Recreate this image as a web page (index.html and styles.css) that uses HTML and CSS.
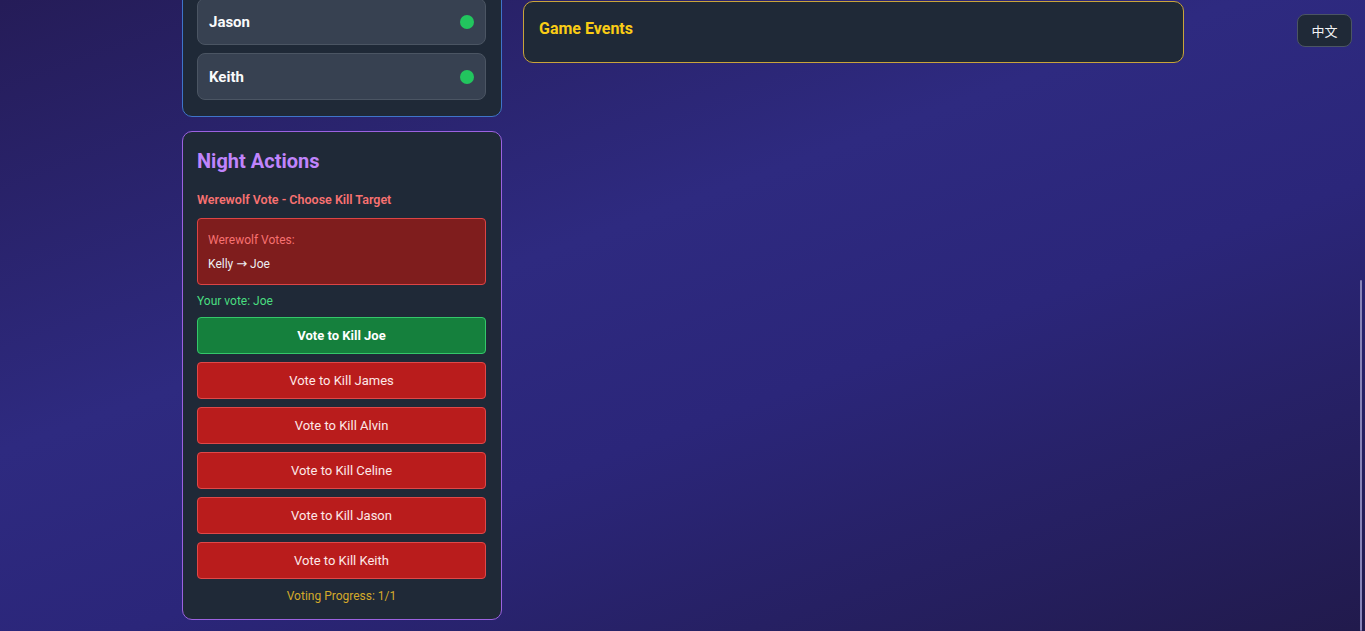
FILE: index.html
```html
<!DOCTYPE html>
<html lang="en">
<head>
<meta charset="utf-8">
<title>Werewolf</title>
<link rel="stylesheet" href="styles.css">
</head>
<body>
<button class="lang-btn">中文</button>
<div class="scroll-thumb"></div>
<main class="layout">
  <div class="left-col">
    <section class="card card-players">
      <div class="player-row"><span class="player-name">Jason</span><span class="dot"></span></div>
      <div class="player-row"><span class="player-name">Keith</span><span class="dot"></span></div>
    </section>
    <section class="card card-night">
      <h2 class="night-title">Night Actions</h2>
      <p class="vote-sub">Werewolf Vote - Choose Kill Target</p>
      <div class="votes-box">
        <p class="votes-label">Werewolf Votes:</p>
        <p class="votes-line">Kelly <span class="arrow">→</span> Joe</p>
      </div>
      <p class="your-vote">Your vote: Joe</p>
      <div class="btn-list">
        <button class="vote-btn selected">Vote to Kill Joe</button>
        <button class="vote-btn">Vote to Kill James</button>
        <button class="vote-btn">Vote to Kill Alvin</button>
        <button class="vote-btn">Vote to Kill Celine</button>
        <button class="vote-btn">Vote to Kill Jason</button>
        <button class="vote-btn">Vote to Kill Keith</button>
      </div>
      <p class="progress">Voting Progress: 1/1</p>
    </section>
  </div>
  <div class="right-col">
    <section class="card card-events">
      <h3 class="events-title">Game Events</h3>
    </section>
  </div>
</main>
</body>
</html>
```
FILE: styles.css
```css
* { box-sizing: border-box; }
html, body { height: 100%; }
body {
  margin: 0;
  overflow: hidden;
  font-family: Roboto, "Noto Sans", sans-serif;
  background: linear-gradient(160deg, #251c58 0%, #2e2a80 40%, #2b267a 60%, #211a4c 100%);
  color: #fff;
}
p, h2, h3 { margin: 0; }

.layout {
  width: 1002px;
  margin: 0 0 0 182px;
  display: flex;
  align-items: flex-start;
  gap: 21px;
}
.left-col {
  width: 320px;
  flex: none;
  display: flex;
  flex-direction: column;
  gap: 14px;
  margin-top: -18px;
}
.right-col {
  flex: 1;
  padding-top: 1px;
}

.card {
  background: #1f2937;
  border: 1px solid;
  border-radius: 10px;
}
.card-players {
  border-color: #3f74c9;
  padding: 15px 15px 16px 14px;
  display: flex;
  flex-direction: column;
  gap: 8px;
}
.player-row {
  height: 47px;
  background: #374151;
  border: 1px solid #4b5563;
  border-radius: 8px;
  display: flex;
  align-items: center;
  justify-content: space-between;
  padding: 0 11px 0 11px;
}
.player-name {
  font-size: 15px;
  font-weight: 700;
  color: #f9fafb;
}
.dot {
  width: 14px;
  height: 14px;
  border-radius: 50%;
  background: #22c55e;
}

.card-night {
  border-color: #9b62e0;
  padding: 16px 15px 16px 14px;
}
.night-title {
  font-size: 20px;
  font-weight: 700;
  color: #c084fc;
  line-height: 26px;
  margin-bottom: 18px;
}
.vote-sub {
  font-size: 12.5px;
  font-weight: 600;
  color: #f87171;
  line-height: 16px;
  margin-bottom: 10px;
}
.votes-box {
  background: #7f1d1d;
  border: 1px solid #dc4444;
  border-radius: 4px;
  padding: 13px 10px 12px;
  display: flex;
  flex-direction: column;
  gap: 8px;
}
.votes-label {
  font-size: 12px;
  color: #f87171;
  line-height: 16px;
}
.votes-line {
  font-size: 12px;
  color: #eceef2;
  line-height: 16px;
}
.arrow {
  font-family: "DejaVu Sans", sans-serif;
  font-size: 13px;
}
.your-vote {
  font-size: 12px;
  color: #4ade80;
  line-height: 16px;
  margin: 8px 0 8px;
}
.btn-list {
  display: flex;
  flex-direction: column;
  gap: 8px;
}
.vote-btn {
  height: 37px;
  border-radius: 4px;
  border: 1px solid #e04848;
  background: #b91c1c;
  color: #fde8e8;
  font-family: inherit;
  font-size: 13px;
  cursor: pointer;
}
.vote-btn.selected {
  background: #15803d;
  border-color: #34c76a;
  color: #fff;
  font-weight: 700;
}
.progress {
  text-align: center;
  font-size: 12px;
  color: #d4a92a;
  line-height: 16px;
  margin-top: 9px;
  margin-bottom: -1px;
}

.card-events {
  border-color: #c9a43a;
  height: 62px;
  padding: 0 15px;
  display: flex;
  align-items: center;
}
.events-title {
  font-size: 16px;
  font-weight: 700;
  color: #facc15;
  margin-top: -8px;
}

.lang-btn {
  position: fixed;
  top: 14px;
  right: 13px;
  width: 55px;
  height: 33px;
  background: #1f2937;
  border: 1px solid #4b5563;
  border-radius: 8px;
  color: #f3f4f6;
  font-size: 13px;
  font-family: "Noto Sans CJK SC", sans-serif;
}
.scroll-thumb {
  position: fixed;
  right: 3px;
  top: 280px;
  bottom: 0;
  width: 2px;
  background: #8884b8;
  border-radius: 1px;
}
```
